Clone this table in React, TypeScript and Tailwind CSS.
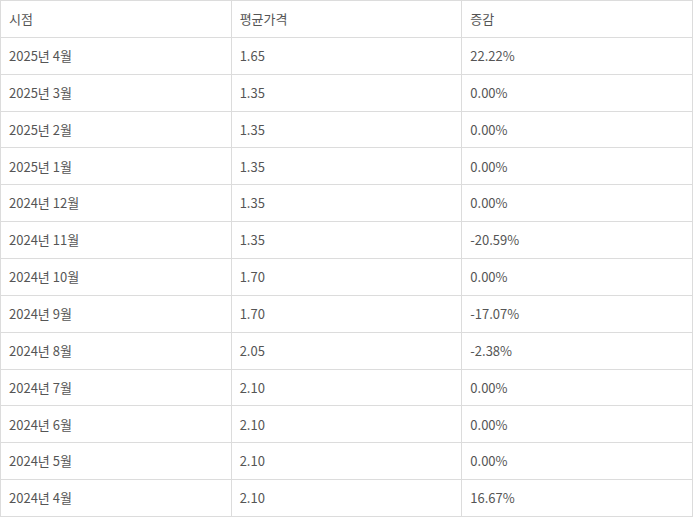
import React from 'react';

interface PriceRow {
  period: string;
  price: string;
  change: string;
}

const rows: PriceRow[] = [
  { period: '2025년 4월', price: '1.65', change: '22.22%' },
  { period: '2025년 3월', price: '1.35', change: '0.00%' },
  { period: '2025년 2월', price: '1.35', change: '0.00%' },
  { period: '2025년 1월', price: '1.35', change: '0.00%' },
  { period: '2024년 12월', price: '1.35', change: '0.00%' },
  { period: '2024년 11월', price: '1.35', change: '-20.59%' },
  { period: '2024년 10월', price: '1.70', change: '0.00%' },
  { period: '2024년 9월', price: '1.70', change: '-17.07%' },
  { period: '2024년 8월', price: '2.05', change: '-2.38%' },
  { period: '2024년 7월', price: '2.10', change: '0.00%' },
  { period: '2024년 6월', price: '2.10', change: '0.00%' },
  { period: '2024년 5월', price: '2.10', change: '0.00%' },
  { period: '2024년 4월', price: '2.10', change: '16.67%' },
];

const cell = 'border border-[#dcdcdc] px-2 text-left align-middle font-normal';

export default function App() {
  return (
    <div className="w-[693px] bg-white font-['Noto_Sans_CJK_KR',sans-serif] text-[13px] text-[#555]">
      <table className="w-full table-fixed border-collapse">
        <thead>
          <tr className="h-[36.86px]">
            <th className={cell}>시점</th>
            <th className={cell}>평균가격</th>
            <th className={cell}>증감</th>
          </tr>
        </thead>
        <tbody>
          {rows.map((r) => (
            <tr key={r.period} className="h-[36.86px]">
              <td className={cell}>{r.period}</td>
              <td className={cell}>{r.price}</td>
              <td className={cell}>{r.change}</td>
            </tr>
          ))}
        </tbody>
      </table>
    </div>
  );
}
